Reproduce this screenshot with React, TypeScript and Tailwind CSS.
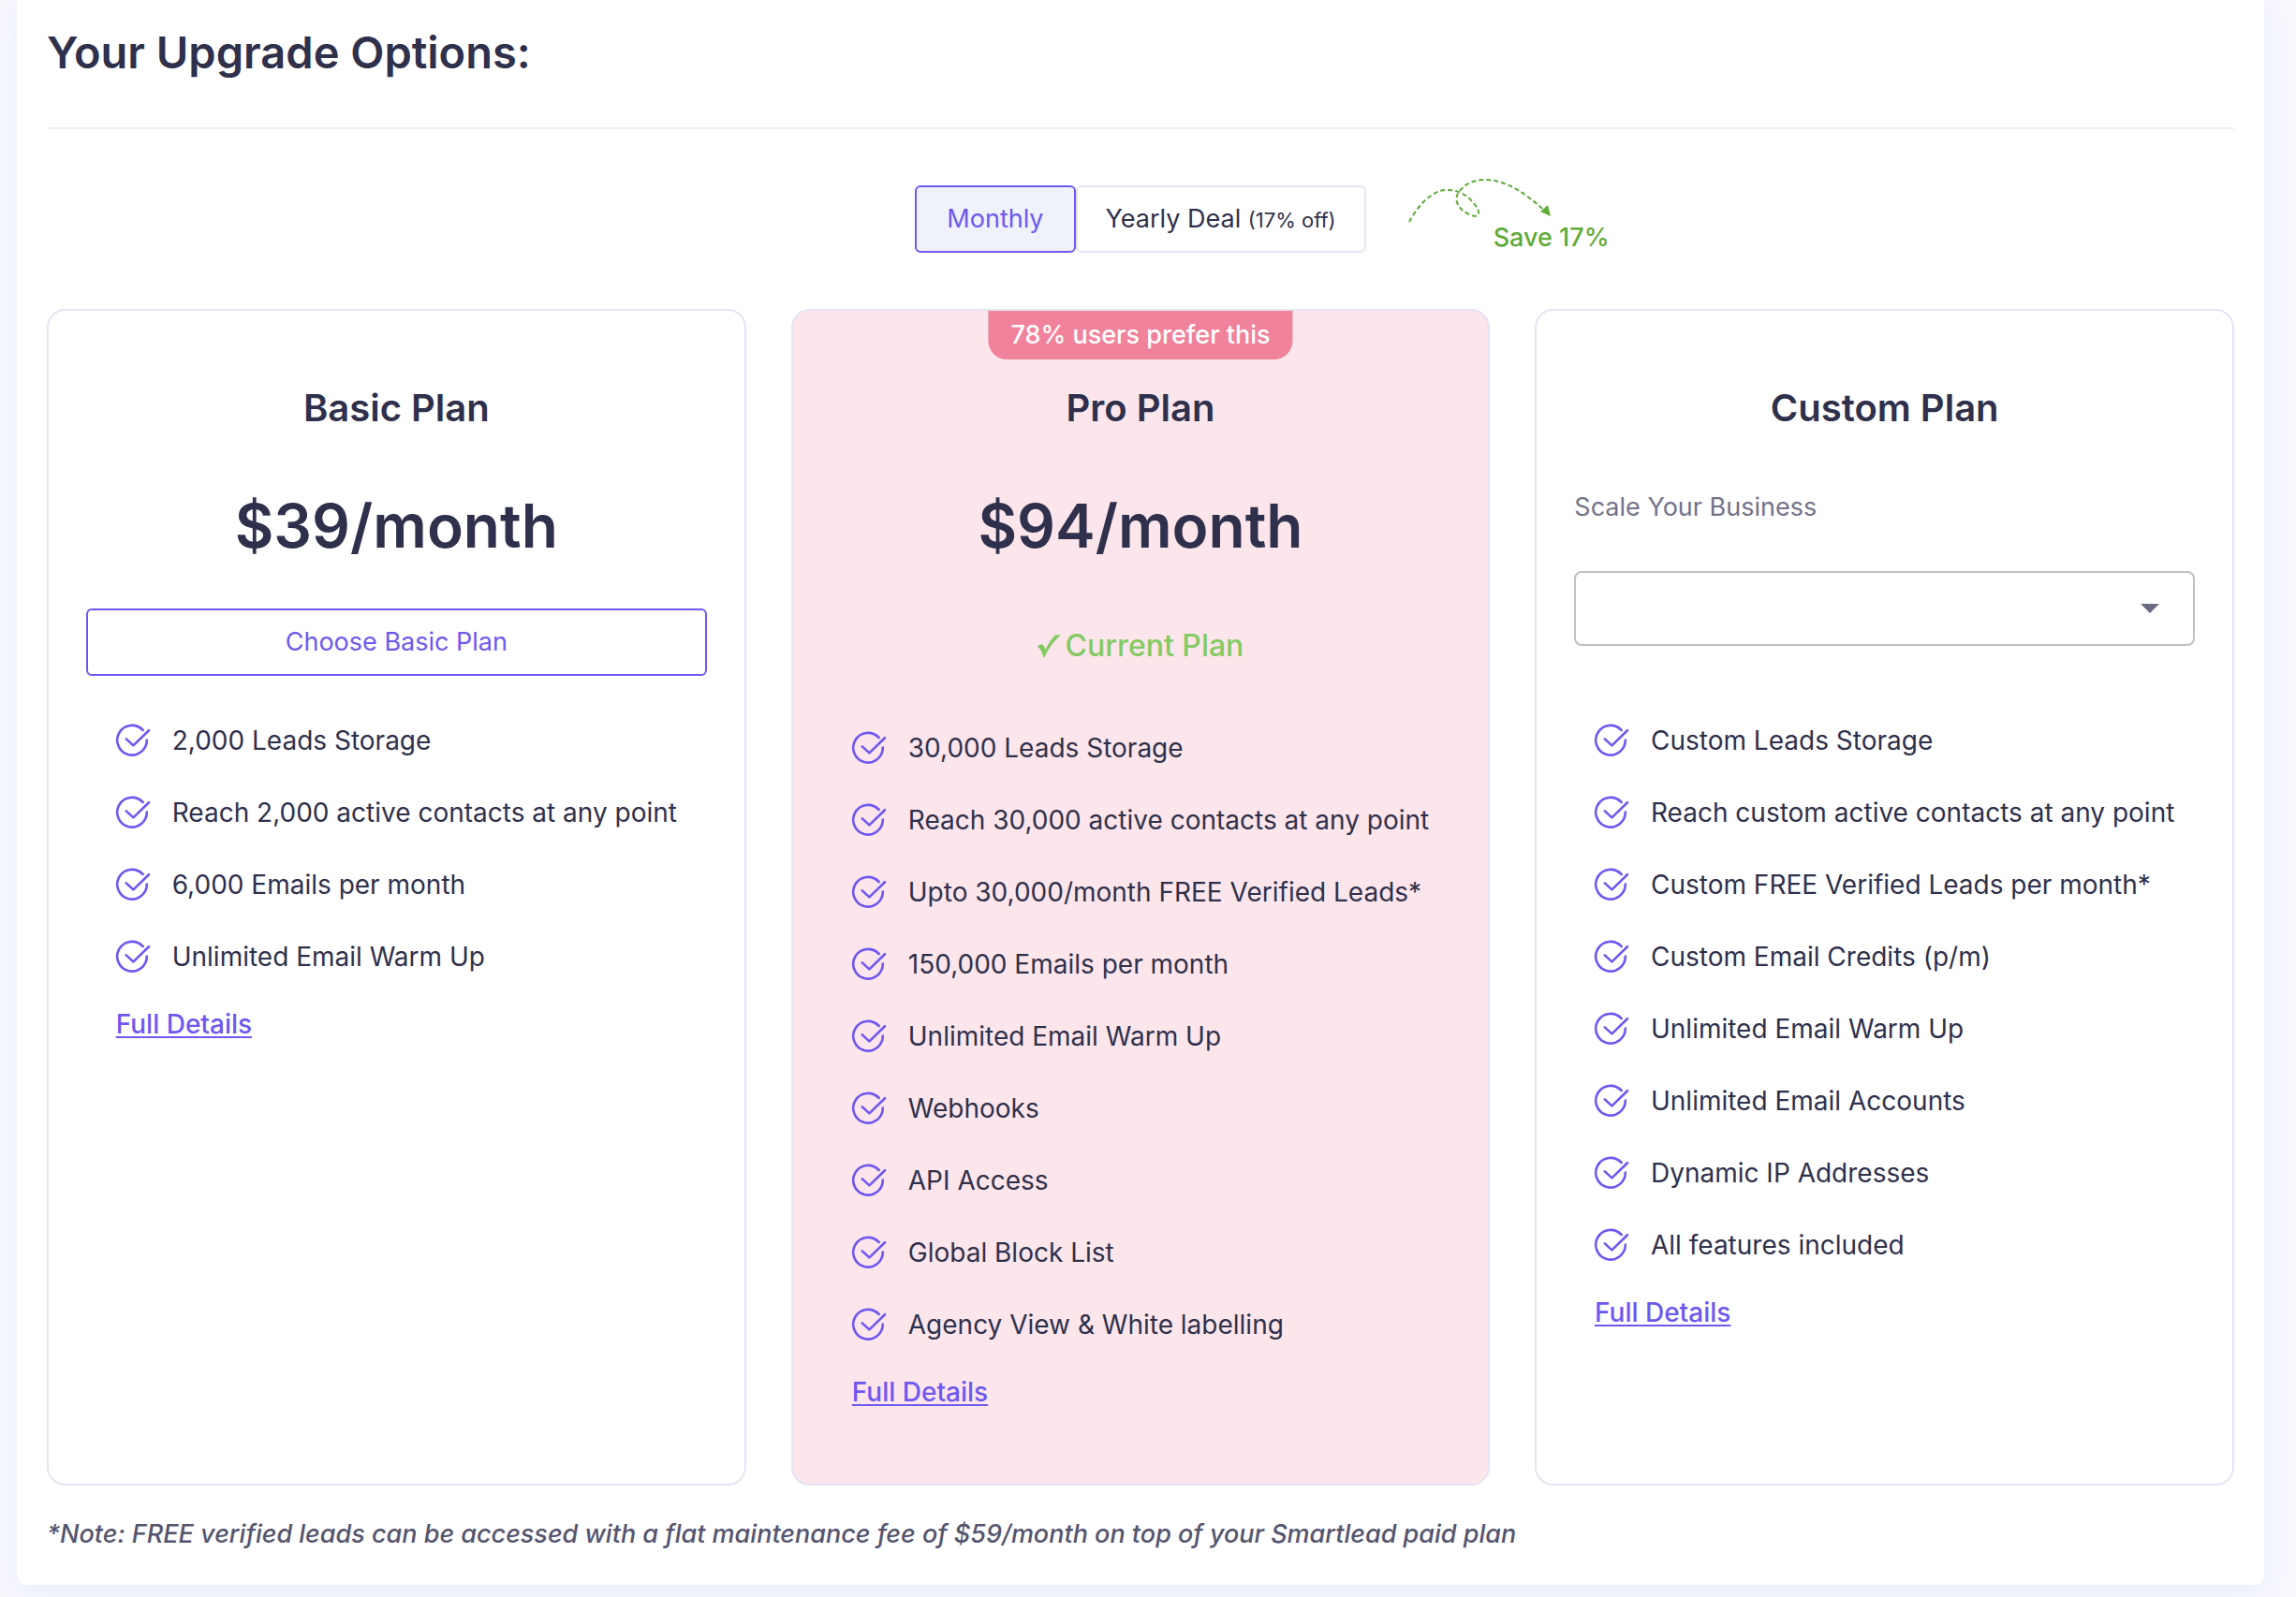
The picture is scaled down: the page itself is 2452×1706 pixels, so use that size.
import { useState } from 'react';

const basicFeatures = [
  '2,000 Leads Storage',
  'Reach 2,000 active contacts at any point',
  '6,000 Emails per month',
  'Unlimited Email Warm Up',
];

const proFeatures = [
  '30,000 Leads Storage',
  'Reach 30,000 active contacts at any point',
  'Upto 30,000/month FREE Verified Leads*',
  '150,000 Emails per month',
  'Unlimited Email Warm Up',
  'Webhooks',
  'API Access',
  'Global Block List',
  'Agency View & White labelling',
];

const customFeatures = [
  'Custom Leads Storage',
  'Reach custom active contacts at any point',
  'Custom FREE Verified Leads per month*',
  'Custom Email Credits (p/m)',
  'Unlimited Email Warm Up',
  'Unlimited Email Accounts',
  'Dynamic IP Addresses',
  'All features included',
];

const CheckIcon = () => (
  <svg
    viewBox="0 0 36 34"
    className="h-[34px] w-9 shrink-0 overflow-visible"
    fill="none"
    stroke="#6e58f1"
    strokeWidth="2.6"
    strokeLinecap="round"
    strokeLinejoin="round"
    aria-hidden="true"
  >
    <path d="M28.6 6A15.8 15.8 0 1 0 32.8 16.6" />
    <path d="M10.8 15.4 18.4 22.4 35 6.2" />
  </svg>
);

const SaveArrow = () => (
  <svg viewBox="0 0 160 50" className="h-[50px] w-40" fill="none" aria-hidden="true">
    <path
      d="M4 47C13 30 28 13 44 13C60 12 72 24 77 33C81 42 74 42 68 39C56 34 51 23 57 15C65 5 74 2 85 2C106 2 128 16 146 33"
      stroke="#5fab38"
      strokeWidth="2"
      strokeDasharray="5 3"
    />
    <path d="M144 36 152 29 155 41Z" fill="#5fab38" />
  </svg>
);

const FeatureList = ({ features }: { features: string[] }) => (
  <div className="mx-auto w-fit">
    <ul>
      {features.map((feature) => (
        <li key={feature} className="flex h-[77px] items-center gap-6 text-[28px] whitespace-nowrap">
          <CheckIcon />
          {feature}
        </li>
      ))}
    </ul>
    <a href="#details" className="mt-[14px] inline-block text-[28px] leading-10 font-medium text-[#6e58f1] underline underline-offset-3">
      Full Details
    </a>
  </div>
);

const cardClass = 'rounded-[20px] border-2 border-[#e5e4f2] px-10 pt-20 pb-[78px]';
const titleClass = 'text-center text-[40px] leading-[48px] font-semibold';
const priceClass = 'mt-[62px] text-center text-[64px] leading-[80px] font-semibold';

export default function App() {
  const [billing, setBilling] = useState('monthly');
  const active = 'border-[#6e58f1] bg-[#eff2fb] text-[#6e58f1]';
  const inactive = 'border-[#e5e4f2] bg-white';

  return (
    <div className="min-h-screen bg-[#f8f9ff] pr-[34px] pb-3 pl-[18px] font-['Inter',sans-serif] text-[#2f304c]">
      <main className="rounded-b-[10px] bg-white px-8 pt-7 pb-[34px] shadow-[0_8px_32px_rgba(60,80,140,0.08)]">
        <h1 className="border-b-2 border-[#efeff6] pb-[52px] text-[47px] leading-[56px] font-semibold">
          Your Upgrade Options:
        </h1>

        <div className="mt-[60px] grid grid-cols-[1fr_auto_1fr] items-start">
          <div className="col-start-2 flex">
            <button
              type="button"
              onClick={() => setBilling('monthly')}
              className={`h-[72px] rounded-md border-2 px-8 text-[27px] ${billing === 'monthly' ? active : inactive}`}
            >
              Monthly
            </button>
            <button
              type="button"
              onClick={() => setBilling('yearly')}
              className={`h-[72px] rounded-md border-2 px-[30px] text-[27px] ${billing === 'yearly' ? active : inactive}`}
            >
              Yearly Deal <span className="text-[22px]">(17% off)</span>
            </button>
          </div>
          <div className="relative ml-[42px] h-[72px]">
            <div className="absolute -top-2 left-0">
              <SaveArrow />
            </div>
            <p className="absolute top-9 left-[94px] text-[27px] leading-10 font-medium whitespace-nowrap text-[#5fab38]">
              Save 17%
            </p>
          </div>
        </div>

        <div className="mt-[60px] grid grid-cols-3 gap-12">
          <section className={cardClass}>
            <h2 className={titleClass}>Basic Plan</h2>
            <p className={priceClass}>$39/month</p>
            <button
              type="button"
              className="mt-12 mb-[30px] h-[72px] w-full rounded-md border-2 border-[#6e58f1] text-[27px] text-[#6e58f1]"
            >
              Choose Basic Plan
            </button>
            <FeatureList features={basicFeatures} />
          </section>

          <section className={`relative bg-[#fce5eb] ${cardClass}`}>
            <span className="absolute top-0 left-1/2 -translate-x-1/2 rounded-b-[20px] bg-[#f0839b] px-6 text-[27px] leading-[52px] font-medium whitespace-nowrap text-white">
              78% users prefer this
            </span>
            <h2 className={titleClass}>Pro Plan</h2>
            <p className={priceClass}>$94/month</p>
            <p className="mt-16 mb-[46px] flex items-center justify-center gap-1 text-[32px] leading-[48px] font-medium text-[#84ca62]">
              <svg viewBox="0 0 26 24" className="h-6 w-[26px]" fill="currentColor" aria-hidden="true">
                <path d="M0 12.5Q4 9 6 11Q8 13 8.5 16Q14 5 19 .5Q21 0 25 0Q13 11 7.5 24L6 24Q5 17 0 12.5Z" />
              </svg>
              Current Plan
            </p>
            <FeatureList features={proFeatures} />
          </section>

          <section className={cardClass}>
            <h2 className={titleClass}>Custom Plan</h2>
            <label htmlFor="scale" className="mt-[62px] block text-[27px] leading-10 text-[#73728a]">
              Scale Your Business
            </label>
            <div className="relative mt-12 mb-[62px]">
              <select
                id="scale"
                className="block h-20 w-full appearance-none rounded-lg border-2 border-[#bfbfc6] bg-white px-7 text-[27px]"
              >
                <option value=""></option>
              </select>
              <svg
                viewBox="0 0 20 10"
                className="pointer-events-none absolute top-[35px] right-[38px] h-2.5 w-5"
                fill="#6b6b82"
                aria-hidden="true"
              >
                <path d="M0 0H20L10 10Z" />
              </svg>
            </div>
            <FeatureList features={customFeatures} />
          </section>
        </div>

        <p className="mt-8 text-[27px] leading-10 font-medium text-[#55556f] italic">
          *Note: FREE verified leads can be accessed with a flat maintenance fee of $59/month on top of your Smartlead paid plan
        </p>
      </main>
    </div>
  );
}
